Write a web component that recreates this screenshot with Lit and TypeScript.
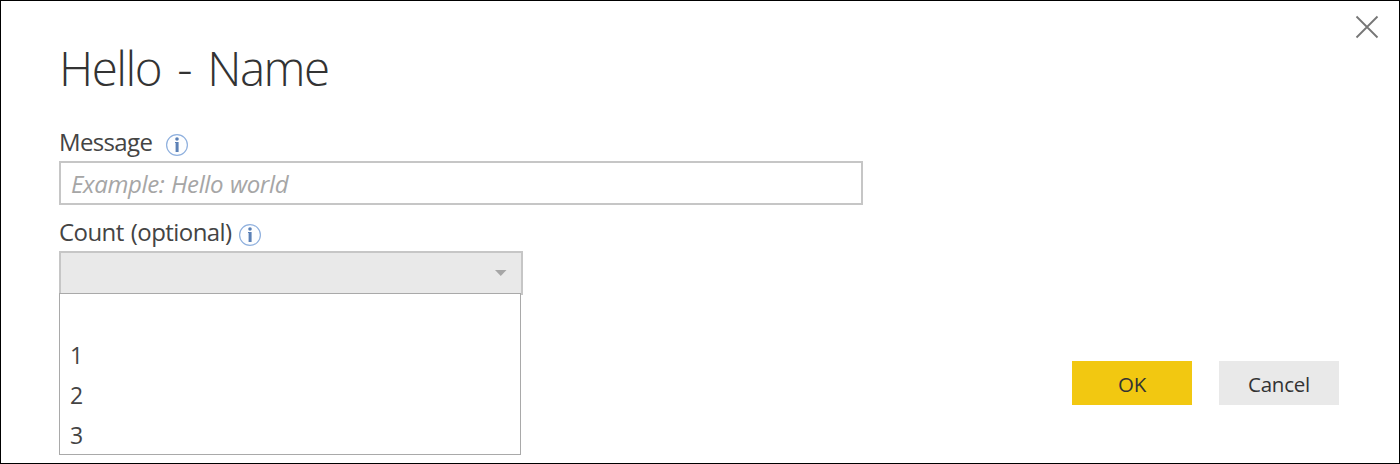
import { LitElement, html, css } from "lit";
import { customElement } from "lit/decorators.js";

@customElement("info-icon")
class InfoIcon extends LitElement {
  static styles = css`
    :host { display: block; width: 22px; height: 22px; }
    svg { display: block; }
  `;
  render() {
    return html`<svg width="22" height="22" viewBox="0 0 22 22">
      <circle cx="11" cy="11" r="10.4" fill="#fdfeff" stroke="#8fb0de" stroke-width="1.2" />
      <circle cx="11" cy="5" r="1.8" fill="#5b80b6" />
      <path d="M9 8H12.6V18H9.6V9H9Z" fill="#5b80b6" />
    </svg>`;
  }
}

@customElement("app-root")
class AppRoot extends LitElement {
  static styles = css`
    :host {
      display: block;
      font-family: "Open Sans", "Noto Sans", sans-serif;
      color: #444;
    }
    * { box-sizing: border-box; }
    .dialog {
      position: relative;
      display: flex;
      justify-content: space-between;
      align-items: flex-start;
      width: 1400px;
      height: 464px;
      padding: 33px 60px 0 58px;
      border: 1px solid #000;
      background: #fff;
      overflow: hidden;
    }
    .form { width: 804px; }
    h1 {
      margin: 0;
      height: 93px;
      font-size: 47.5px;
      font-weight: 300;
      line-height: 68px;
      letter-spacing: -1.5px;
      word-spacing: 5.3px;
      white-space: nowrap;
      color: #333;
    }
    .label {
      display: flex;
      height: 34px;
      font-size: 24px;
      line-height: 30px;
      white-space: nowrap;
    }
    .label info-icon { margin-top: 7px; }
    .message { width: 107px; }
    .count { width: 180px; }
    .message-text { letter-spacing: -0.65px; }
    .count-text { letter-spacing: -0.57px; word-spacing: 1.5px; }
    .input {
      height: 44px;
      margin-bottom: 12px;
      padding-left: 10px;
      border: 2px solid #c6c6c6;
      font-size: 24px;
      font-style: italic;
      line-height: 41px;
      letter-spacing: -0.36px;
      word-spacing: 0.8px;
      color: #a6a6a6;
    }
    .select {
      position: relative;
      display: flex;
      justify-content: flex-end;
      align-items: center;
      width: 464px;
      height: 44px;
      padding-right: 14px;
      border: 2px solid #c6c6c6;
      background: #e9e9e9;
    }
    .menu {
      position: absolute;
      left: -2px;
      top: 40px;
      width: 462px;
      height: 162px;
      margin: 0;
      padding: 0;
      border: 1px solid #a9a9a9;
      background: #fff;
      list-style: none;
    }
    .menu li {
      height: 40px;
      padding-left: 10px;
      font-size: 23px;
      line-height: 43px;
    }
    .actions { display: flex; gap: 27px; margin-top: 327px; }
    .button {
      width: 120px;
      height: 44px;
      background: #e9e9e9;
      color: #333;
      font-size: 20.5px;
      line-height: 46px;
      letter-spacing: -0.25px;
      text-align: center;
    }
    .primary { background: #f2c811; }
    .close { position: absolute; left: 1354px; top: 14px; }
  `;
  render() {
    return html`<div class="dialog">
      <div class="form">
        <h1>Hello - Name</h1>
        <div class="label"><div class="message"><span class="message-text">Message</span></div><info-icon></info-icon></div>
        <div class="input">Example: Hello world</div>
        <div class="label"><div class="count"><span class="count-text">Count (optional)</span></div><info-icon></info-icon></div>
        <div class="select">
          <svg width="12" height="6" viewBox="0 0 12 6"><path d="M0 0H11.5L5.75 6Z" fill="#a6a6a6" /></svg>
          <ul class="menu">
            ${["", "1", "2", "3"].map((v) => html`<li>${v}</li>`)}
          </ul>
        </div>
      </div>
      <div class="actions">
        <div class="button primary">OK</div>
        <div class="button">Cancel</div>
      </div>
      <svg class="close" width="24" height="24" viewBox="0 0 24 24"><path d="M1.5 1.5L22.5 22.5M22.5 1.5L1.5 22.5" stroke="#767676" stroke-width="1.8" /></svg>
    </div>`;
  }
}
